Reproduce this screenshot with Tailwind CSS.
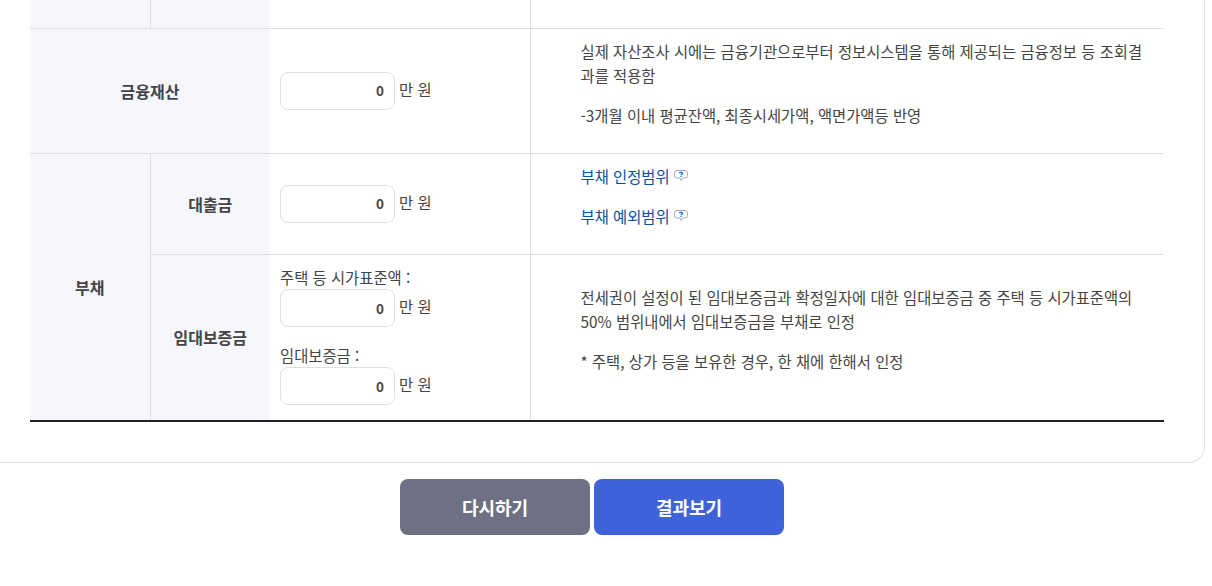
<!DOCTYPE html>
<html lang="ko"><head><meta charset="utf-8"><script src="https://cdn.jsdelivr.net/npm/@tailwindcss/browser@4"></script></head>
<body class="bg-white overflow-hidden font-['Noto_Sans_CJK_KR','Noto_Sans_CJK_SC',sans-serif] text-[15.36px] text-[#444]">
<div class="w-[1212px] h-[586px] overflow-hidden">
<div class="w-[1205px] h-[463px] border-r border-b border-[#e3e3e3] rounded-br-[16px] pl-[30px] pr-[40px]">
<table class="w-[1134px] table-fixed border-collapse border-b-2 border-[#222]">
<colgroup><col class="w-[120px]"><col class="w-[120px]"><col class="w-[260px]"><col></colgroup>
<tbody>
<tr class="h-[28px] border-b border-[#dfdfdf]"><td class="bg-[#f5f7fc] border-r border-[#dfdfdf]"></td><td class="bg-[#f5f7fc]"></td><td class="border-r border-[#dfdfdf]"></td><td></td></tr>
<tr class="h-[125px] border-b border-[#dfdfdf]">
<th colspan="2" class="bg-[#f5f7fc] font-bold text-[16px] text-center">금융재산</th>
<td class="border-r border-[#dfdfdf] pl-[10px]"><div class="flex items-center gap-1"><div class="w-[115px] h-[38px] border border-[#e0e0e0] rounded-lg bg-white flex items-center justify-end pr-[10px] text-[13.5px] font-bold">0</div><span class="-mt-[2px]">만 원</span></div></td>
<td class="pl-[50px] pr-[20px] pb-[16px] leading-[24px]"><p>실제 자산조사 시에는 금융기관으로부터 정보시스템을 통해 제공되는 금융정보 등 조회결과를 적용함</p><p class="mt-[16px]">-3개월 이내 평균잔액, 최종시세가액, 액면가액등 반영</p></td>
</tr>
<tr class="h-[101px] border-b border-[#dfdfdf]">
<th rowspan="2" class="bg-[#f5f7fc] border-r border-[#dfdfdf] font-bold text-[16px] text-center">부채</th>
<th class="bg-[#f5f7fc] font-bold text-[16px] text-center">대출금</th>
<td class="border-r border-[#dfdfdf] pl-[10px]"><div class="flex items-center gap-1"><div class="w-[115px] h-[38px] border border-[#e0e0e0] rounded-lg bg-white flex items-center justify-end pr-[10px] text-[13.5px] font-bold">0</div><span class="-mt-[2px]">만 원</span></div></td>
<td class="pl-[50px] pr-[20px] pb-[14px] leading-[24px]">
<p class="flex items-center gap-[3px] text-[#0b4ea2] -mt-[2px]">부채 인정범위<svg width="16" height="14" viewBox="0 0 16 14" fill="none"><path d="M4 1.500h8a2.500 2.500 0 0 1 2.500 2.500v2.500a2.500 2.500 0 0 1-2.500 2.500h-2l-2 2.500-1-2.500H4A2.500 2.500 0 0 1 1.500 6.500V4A2.500 2.500 0 0 1 4 1.500z" stroke="#aaa" fill="#fff"/><path d="M6.300 4.200c.3-1.100 3.400-1.100 3.400.3 0 1-1.700.8-1.700 1.700M8 6.900v1" stroke="#0b6ae0" stroke-width="1.200"/></svg></p>
<p class="flex items-center gap-[3px] text-[#0b4ea2] mt-[16px]">부채 예외범위<svg width="16" height="14" viewBox="0 0 16 14" fill="none"><path d="M4 1.500h8a2.500 2.500 0 0 1 2.500 2.500v2.500a2.500 2.500 0 0 1-2.500 2.500h-2l-2 2.500-1-2.500H4A2.500 2.500 0 0 1 1.500 6.500V4A2.500 2.500 0 0 1 4 1.500z" stroke="#aaa" fill="#fff"/><path d="M6.300 4.200c.3-1.100 3.400-1.100 3.400.3 0 1-1.700.8-1.700 1.700M8 6.900v1" stroke="#0b6ae0" stroke-width="1.200"/></svg></p>
</td>
</tr>
<tr class="h-[167px]">
<th class="bg-[#f5f7fc] font-bold text-[16px] text-center">임대보증금</th>
<td class="border-r border-[#dfdfdf] pl-[10px] pb-[3px]">
<div class="leading-[22px] -mt-[1px] pb-[1px]">주택 등 시가표준액 :</div>
<div class="flex items-center gap-1"><div class="w-[115px] h-[38px] border border-[#e0e0e0] rounded-lg bg-white flex items-center justify-end pr-[10px] text-[13.5px] font-bold">0</div><span class="-mt-[2px]">만 원</span></div>
<div class="leading-[22px] mt-[17px] pb-[1px]">임대보증금 :</div>
<div class="flex items-center gap-1"><div class="w-[115px] h-[38px] border border-[#e0e0e0] rounded-lg bg-white flex items-center justify-end pr-[10px] text-[13.5px] font-bold">0</div><span class="-mt-[2px]">만 원</span></div>
</td>
<td class="pl-[50px] pr-[20px] pb-[16px] leading-[24px]"><p>전세권이 설정이 된 임대보증금과 확정일자에 대한 임대보증금 중 주택 등 시가표준액의 50% 범위내에서 임대보증금을 부채로 인정</p><p class="mt-[16px]">* 주택, 상가 등을 보유한 경우, 한 채에 한해서 인정</p></td>
</tr>
</tbody></table>
</div>
<div class="flex justify-center gap-1 mt-[16px] pr-[28px]">
<button class="w-[190px] h-[56px] rounded-lg bg-[#6e7083] text-white text-[18px] font-bold">다시하기</button>
<button class="w-[190px] h-[56px] rounded-lg bg-[#3f62d9] text-white text-[18px] font-bold">결과보기</button>
</div>
</div>
</body></html>
